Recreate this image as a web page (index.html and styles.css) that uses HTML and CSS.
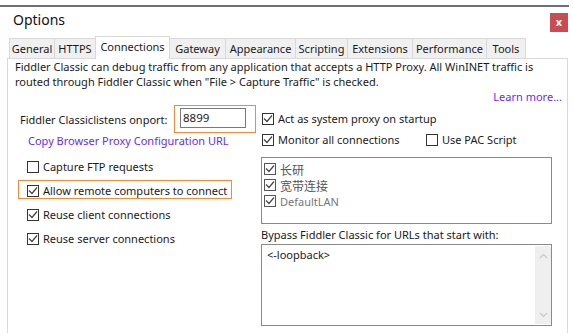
FILE: index.html
```html
<!DOCTYPE html>
<html lang="en">
<head>
  <meta charset="UTF-8" />
  <title>Options</title>
  <link rel="stylesheet" href="styles.css">
</head>
<body>
  <div class="topline"></div>
  <div class="titlebar">
    <span class="title">Options</span>
    <span class="close">x</span>
  </div>

  <div class="tabs">
    <div class="tab" style="width:46px">General</div>
    <div class="tab" style="width:42px">HTTPS</div>
    <div class="tab active" style="width:75px">Connections</div>
    <div class="tab" style="width:57px">Gateway</div>
    <div class="tab" style="width:71px">Appearance</div>
    <div class="tab" style="width:53px">Scripting</div>
    <div class="tab" style="width:66px">Extensions</div>
    <div class="tab" style="width:75px">Performance</div>
    <div class="tab" style="width:40px">Tools</div>
  </div>

  <div class="panel">
    <p class="intro">Fiddler Classic can debug traffic from any application that accepts a HTTP Proxy. All WinINET traffic is routed through Fiddler Classic when "File &gt; Capture Traffic" is checked.</p>
    <div class="learn"><a href="#">Learn more...</a></div>

    <div class="cols">
      <div class="left">
        <div class="port-row">
          <span class="port-label">Fiddler Classiclistens onport:</span>
          <div class="port-wrap"><div class="port">8899</div></div>
        </div>
        <a class="copy" href="#">Copy Browser Proxy Configuration URL</a>

        <div class="check ftp"><span class="box"></span>Capture FTP requests</div>
        <div class="check remote"><span class="box on"></span>Allow remote computers to connect</div>
        <div class="check client"><span class="box on"></span>Reuse client connections</div>
        <div class="check server"><span class="box on"></span>Reuse server connections</div>
      </div>

      <div class="right">
        <div class="check sys"><span class="box on"></span>Act as system proxy on startup</div>
        <div class="check-row">
          <div class="check monitor"><span class="box on"></span>Monitor all connections</div>
          <div class="check"><span class="box"></span>Use PAC Script</div>
        </div>

        <div class="listbox">
          <div class="item"><span class="box on"></span>长研</div>
          <div class="item"><span class="box on"></span>宽带连接</div>
          <div class="item light"><span class="box on"></span>DefaultLAN</div>
        </div>

        <div class="bypass-label">Bypass Fiddler Classic for URLs that start with:</div>
        <div class="textarea">
          <div class="text">&lt;-loopback&gt;</div>
          <div class="scroll">
            <svg width="9" height="6" viewBox="0 0 9 6"><path d="M1 5 L4.5 1.5 L8 5" fill="none" stroke="#c8c8c8" stroke-width="1.2"/></svg>
            <svg width="9" height="6" viewBox="0 0 9 6"><path d="M1 1 L4.5 4.5 L8 1" fill="none" stroke="#c8c8c8" stroke-width="1.2"/></svg>
          </div>
        </div>
      </div>
    </div>
  </div>
</body>
</html>
```

FILE: styles.css
```css
body {
  margin: 0;
  width: 573px;
  height: 333px;
  overflow: hidden;
  background: #fff;
  font-family: "Noto Sans", "Noto Sans CJK SC", sans-serif;
  font-size: 11px;
  color: #1a1a1a;
}

.topline {
  margin-top: 5px;
  width: 569px;
  height: 2px;
  background: #707070;
}

.titlebar {
  display: flex;
  justify-content: space-between;
  align-items: flex-start;
  height: 29px;
  padding: 0 5px 0 13px;
  box-sizing: border-box;
}

.title {
  margin-top: 3px;
  font-size: 14px;
  line-height: 20px;
  color: #111;
}

.close {
  width: 18px;
  height: 19px;
  margin-top: 6px;
  background: #c94c52;
  color: #fff;
  font-size: 11px;
  font-weight: bold;
  text-align: center;
  line-height: 18px;
}

.tabs {
  display: flex;
  align-items: flex-end;
  height: 22px;
  padding-left: 9px;
}

.tab {
  height: 20px;
  box-sizing: border-box;
  border: 1px solid #d9d9d9;
  border-bottom: none;
  margin-left: -1px;
  background: #f0f0f0;
  text-align: center;
  line-height: 19px;
}

.tab:first-child {
  margin-left: 0;
}

.tab.active {
  height: 23px;
  background: #fff;
  line-height: 19px;
  margin-bottom: -1px;
  position: relative;
  z-index: 1;
}

.panel {
  margin-left: 7px;
  width: 561px;
  height: 275px;
  box-sizing: border-box;
  border: 1px solid #d9d9d9;
  border-bottom: none;
}

.intro {
  margin: 0;
  padding: 0 8px 0 7px;
  line-height: 15px;
  height: 30px;
}

.learn {
  text-align: right;
  padding-right: 5px;
  line-height: 15px;
}

a {
  color: #6a2cf0;
  text-decoration: none;
}

.cols {
  display: grid;
  grid-template-columns: 253px 1fr;
}

.port-row {
  display: flex;
  align-items: center;
  height: 28px;
  margin-top: 1px;
  padding-left: 12px;
}

.port-label {
  width: 154px;
}

.port-wrap {
  width: 82px;
  height: 28px;
  box-sizing: border-box;
  border: 1px solid #f08a3c;
  padding: 2px 0 0 5px;
}

.port {
  width: 66px;
  height: 20px;
  box-sizing: border-box;
  border: 1px solid #7a7a7a;
  padding-left: 2px;
  line-height: 18px;
  font-size: 11.5px;
}

.copy {
  display: block;
  padding-left: 20px;
  line-height: 15px;
}

.check {
  display: flex;
  align-items: center;
  gap: 4px;
  height: 15px;
  line-height: 15px;
  white-space: nowrap;
}

.box {
  width: 12px;
  height: 12px;
  box-sizing: border-box;
  border: 1px solid #333;
  background: #fff;
  flex: none;
}

.box.on {
  background: url("data:image/svg+xml,%3Csvg xmlns='http://www.w3.org/2000/svg' width='10' height='10'%3E%3Cpath d='M1 4.5 L4 7.5 L9 1.5' fill='none' stroke='%23444' stroke-width='1.2'/%3E%3C/svg%3E") no-repeat center #fff;
}

.left .check {
  padding-left: 19px;
}

.ftp {
  margin-top: 11px;
}

.left .remote {
  margin: 6px 0 0 10px;
  padding: 2px 0 0 8px;
  width: 214px;
  height: 19px;
  box-sizing: border-box;
  border: 1px solid #f08a3c;
}

.client {
  margin-top: 8px;
}

.server {
  margin-top: 9px;
}

.sys {
  margin-top: 7px;
  padding-left: 1px;
}

.check-row {
  display: flex;
  margin-top: 6px;
  padding-left: 1px;
}

.monitor {
  width: 164px;
}

.listbox {
  margin-top: 10px;
  width: 291px;
  height: 67px;
  box-sizing: border-box;
  border: 1px solid #8a8a8a;
  padding: 3px 0 0 2px;
}

.item {
  display: flex;
  align-items: center;
  gap: 4px;
  height: 16px;
  color: #555;
  font-family: "Noto Sans CJK SC", "Noto Sans", sans-serif;
  font-size: 12px;
}

.item.light {
  color: #777;
  font-family: "Noto Sans", sans-serif;
  font-size: 11px;
}

.item .box {
  border-color: #555;
}

.bypass-label {
  margin-top: 3px;
  line-height: 15px;
}

.textarea {
  display: flex;
  margin-top: 2px;
  width: 291px;
  height: 82px;
  box-sizing: border-box;
  border: 1px solid #8a8a8a;
}

.text {
  flex: 1;
  padding: 2px 0 0 5px;
  line-height: 15px;
}

.scroll {
  display: flex;
  flex-direction: column;
  justify-content: space-between;
  align-items: center;
  width: 16px;
  margin: 1px 0;
  padding: 7px 0 6px;
  box-sizing: border-box;
  background: #efefef;
}
```
